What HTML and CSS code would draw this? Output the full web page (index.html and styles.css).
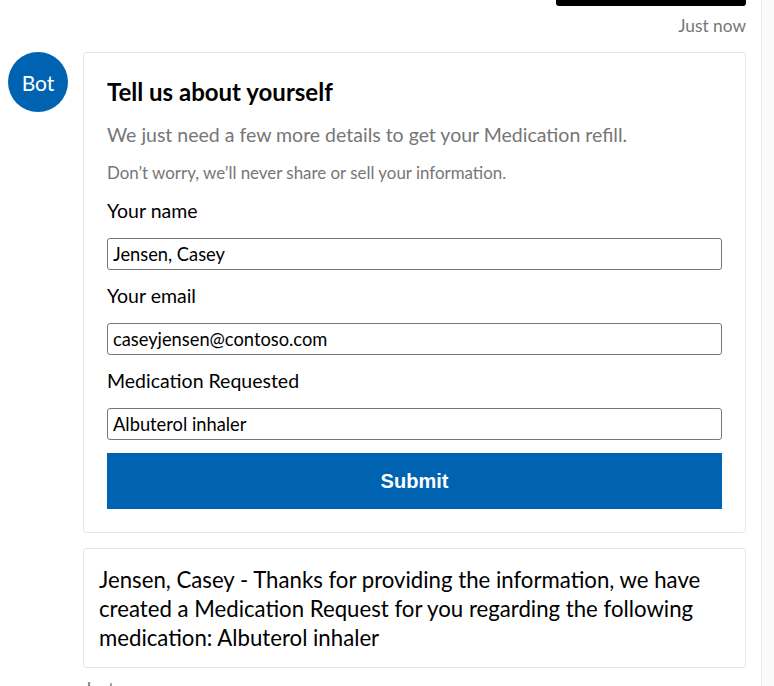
FILE: index.html
```html
<!DOCTYPE html>
<html lang="en">
<head>
<meta charset="utf-8">
<title>Chat</title>
<link rel="stylesheet" href="styles.css">
</head>
<body>
<div class="page">
  <main class="transcript">
    <div class="user-row">
      <div class="user-bubble"></div>
    </div>
    <div class="stamp stamp-right">Just now</div>
    <div class="bot-row">
      <div class="avatar">Bot</div>
      <div class="bot-col">
        <section class="card">
          <h1 class="card-title">Tell us about yourself</h1>
          <p class="card-sub">We just need a few more details to get your Medication refill.</p>
          <p class="card-note">Don’t worry, we’ll never share or sell your information.</p>
          <label class="field-label">Your name</label>
          <div class="input">Jensen, Casey</div>
          <label class="field-label">Your email</label>
          <div class="input">caseyjensen@contoso.com</div>
          <label class="field-label">Medication Requested</label>
          <div class="input">Albuterol inhaler</div>
          <button class="submit">Submit</button>
        </section>
        <div class="message">Jensen, Casey - Thanks for providing the information, we have created a Medication Request for you regarding the following medication: Albuterol inhaler</div>
        <div class="stamp stamp-bottom">Just now</div>
      </div>
    </div>
  </main>
  <div class="scroll-track"></div>
</div>
</body>
</html>
```

FILE: styles.css
```css
html, body {
  margin: 0;
  padding: 0;
  background: #ffffff;
  height: 686px;
  overflow: hidden;
}
body {
  font-family: "Lato", "Open Sans", sans-serif;
  color: #000;
}
.page {
  display: grid;
  grid-template-columns: 761px 13px;
  height: 686px;
}
.transcript {
  padding: 0 15px 0 8px;
}
.scroll-track {
  background: #fafafa;
  border-left: 1px solid #ececec;
}
.user-row {
  display: flex;
  justify-content: flex-end;
}
.user-bubble {
  width: 190px;
  height: 6px;
  background: #000;
  border-radius: 0 0 3px 3px;
}
.stamp {
  font-size: 17.3px;
  color: #767676;
  line-height: 20px;
}
.stamp-right {
  text-align: right;
  margin-top: 10px;
}
.stamp-bottom {
  margin-top: -4px;
  padding-left: 1px;
}
.bot-row {
  display: flex;
  gap: 15px;
  margin-top: 16px;
}
.avatar {
  flex: 0 0 60px;
  width: 60px;
  height: 60px;
  border-radius: 50%;
  background: #0063b1;
  color: #fff;
  font-size: 21px;
  display: flex;
  align-items: center;
  justify-content: center;
}
.bot-col {
  flex: 1;
  display: flex;
  flex-direction: column;
  gap: 15px;
}
.card {
  border: 1px solid #e6e6e6;
  border-radius: 3px;
  padding: 23px;
  display: flex;
  flex-direction: column;
}
.card-title {
  margin: 0;
  font-size: 24px;
  font-weight: 700;
  line-height: 32px;
}
.card-sub {
  margin: 14px 0 0;
  font-size: 19.5px;
  color: #767676;
  line-height: 26px;
}
.card-note {
  margin: 14px 0 0;
  font-size: 16.9px;
  color: #767676;
  line-height: 22px;
}
.field-label {
  margin-top: 14px;
  font-size: 19.5px;
  line-height: 24px;
}
.card-note + .field-label {
  margin-top: 15px;
}
.input {
  margin-top: 15px;
  height: 30px;
  border: 1px solid #767676;
  border-radius: 3px;
  padding: 0 5px;
  font-size: 18.3px;
  line-height: 31px;
}
.submit {
  margin-top: 13px;
  height: 56px;
  border: none;
  background: #0063b1;
  color: #fff;
  font-family: "Liberation Sans", Arial, sans-serif;
  font-weight: 700;
  font-size: 20px;
  padding: 1px 0 0;
}
.message {
  border: 1px solid #e6e6e6;
  border-radius: 3px;
  padding: 16px 15px 15px 15px;
  font-size: 22.2px;
  line-height: 29px;
}
```
